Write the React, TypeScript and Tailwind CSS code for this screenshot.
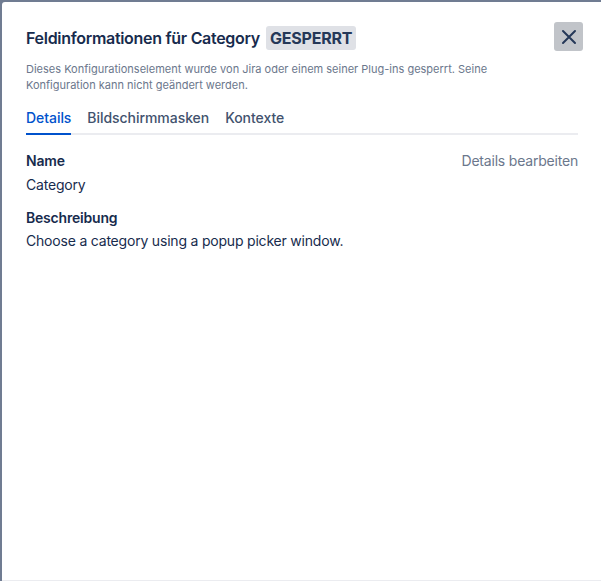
const tabs = ["Details", "Bildschirmmasken", "Kontexte"];

function CloseIcon() {
  return (
    <svg width="16" height="16" viewBox="0 0 16 16" fill="none">
      <path d="M2 2 L14 14 M14 2 L2 14" stroke="#253858" strokeWidth="2" strokeLinecap="round" />
    </svg>
  );
}

export default function App() {
  return (
    <div className="flex h-[581px] w-[601px] flex-col bg-[#707c92] pl-[2px] pt-[2px] font-['Inter',sans-serif] text-[#172b4d]">
      <div className="flex flex-1 flex-col rounded-tl-[3px] border-b border-[#ebecf0] bg-white pl-[24px] pr-[23px] pt-[20px]">
        <div className="flex items-start justify-between">
          <div className="flex items-center gap-[6px] pt-[4px]">
            <h1 className="text-[16px] font-semibold leading-[24px] tracking-[-0.3px]">Feldinformationen für Category</h1>
            <span className="rounded-[3px] bg-[#dfe1e6] px-[4px] text-[16px] font-bold leading-[24px] tracking-[-0.2px] text-[#253858]">
              GESPERRT
            </span>
          </div>
          <button className="mr-[-5px] flex h-[29px] w-[29px] items-center justify-center rounded-[3px] bg-[#c1c4c9]">
            <CloseIcon />
          </button>
        </div>
        <p className="mt-[10px] w-[500px] text-[11px] leading-[16px] text-[#6b778c]">
          Dieses Konfigurationselement wurde von Jira oder einem seiner Plug-ins gesperrt. Seine Konfiguration kann nicht geändert werden.
        </p>
        <div className="mt-[15px] flex gap-[16px] border-b-2 border-[#ebecf0]">
          {tabs.map((tab, i) => (
            <div
              key={tab}
              className={
                i === 0
                  ? "mb-[-2px] border-b-2 border-[#0052cc] pb-[5px] text-[14px] font-medium leading-[20px] tracking-[-0.05px] text-[#0052cc]"
                  : "pb-[5px] text-[14px] font-medium leading-[20px] tracking-[-0.05px] text-[#42526e]"
              }
            >
              {tab}
            </div>
          ))}
        </div>
        <div className="mt-[16px] flex items-center justify-between tracking-[-0.2px]">
          <span className="text-[14px] font-semibold leading-[20px]">Name</span>
          <span className="text-[14px] leading-[20px] text-[#6b778c]">Details bearbeiten</span>
        </div>
        <p className="mt-[4px] text-[14px] leading-[20px] tracking-[-0.2px]">Category</p>
        <p className="mt-[13px] text-[14px] font-semibold leading-[20px] tracking-[-0.2px]">Beschreibung</p>
        <p className="mt-[3px] text-[14px] leading-[20px] tracking-[-0.2px]">Choose a category using a popup picker window.</p>
      </div>
    </div>
  );
}
